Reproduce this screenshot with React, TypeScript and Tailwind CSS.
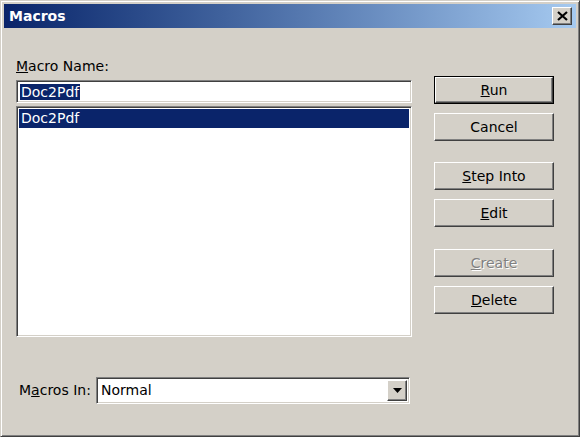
import React from "react";

const FONT = "font-['Tahoma','DejaVu_Sans','Liberation_Sans',sans-serif]";

const raised =
  "border border-t-white border-l-white border-r-[#404040] border-b-[#404040] shadow-[inset_-1px_-1px_0_#808080]";
const sunken =
  "border border-t-[#808080] border-l-[#808080] border-r-white border-b-white shadow-[inset_1px_1px_0_#404040,inset_-1px_-1px_0_#d4d0c8]";

function Btn({
  children,
  isDefault,
  disabled,
  className = "",
}: {
  children: React.ReactNode;
  isDefault?: boolean;
  disabled?: boolean;
  className?: string;
}) {
  const face = (
    <div
      className={`${raised} h-full w-full bg-[#d4d0c8] flex items-center justify-center text-[14px] ${
        disabled ? "text-[#808080] [text-shadow:1px_1px_0_#fff]" : "text-black"
      }`}
    >
      {children}
    </div>
  );
  if (isDefault) {
    return <div className={`h-[28px] border border-black ${className}`}>{face}</div>;
  }
  return <div className={`h-[28px] ${className}`}>{face}</div>;
}

export default function App() {
  return (
    <div
      className={`${FONT} w-[580px] h-[437px] bg-[#d4d0c8] border border-t-[#d4d0c8] border-l-[#d4d0c8] border-r-[#404040] border-b-[#404040] shadow-[inset_1px_1px_0_#fff,inset_-1px_-1px_0_#808080] p-[3px] flex flex-col overflow-hidden`}
    >
      {/* Title bar */}
      <div className="h-[24px] flex items-center justify-between pl-[5px] pr-[4px] bg-gradient-to-r from-[#0a246a] to-[#a6caf0]">
        <span className="text-white font-bold text-[14px] leading-none">Macros</span>
        <div
          className={`${raised} w-[20px] h-[18px] bg-[#d4d0c8] flex items-center justify-center`}
        >
          <svg width="11" height="10" viewBox="0 0 11 10">
            <path d="M1 1 L10 9 M10 1 L1 9" stroke="#000" strokeWidth="2.2" />
          </svg>
        </div>
      </div>

      {/* Body */}
      <div className="flex flex-1">
        {/* Left column */}
        <div className="ml-[12px] w-[396px] flex flex-col pt-[30px]">
          <div className="text-[14px] leading-[16px] text-black h-[16px]">
            <u>M</u>acro Name:
          </div>
          <div className={`${sunken} mt-[6px] h-[23px] bg-white flex items-center px-[3px]`}>
            <span className="bg-[#0a246a] text-white text-[14px] leading-[16px] px-[1px]">
              Doc2Pdf
            </span>
          </div>
          <div className={`${sunken} mt-[3px] h-[231px] bg-white p-[2px]`}>
            <div className="h-[19px] bg-[#0a246a] text-white text-[14px] leading-[19px] pl-[2px]">
              Doc2Pdf
            </div>
          </div>
          <div className="mt-[40px] flex items-center">
            <div className="ml-[3px] w-[77px] text-[14px] text-black">
              M<u>a</u>cros In:
            </div>
            <div className={`${sunken} w-[314px] h-[27px] bg-white flex items-center p-[2px]`}>
              <span className="flex-1 pl-[2px] text-[14px] text-black">Normal</span>
              <div
                className={`${raised} w-[20px] h-full bg-[#d4d0c8] flex items-center justify-center`}
              >
                <svg width="9" height="5" viewBox="0 0 9 5">
                  <path d="M0 0 H9 L4.5 5 Z" fill="#000" />
                </svg>
              </div>
            </div>
          </div>
        </div>

        {/* Right column */}
        <div className="ml-[22px] w-[120px] flex flex-col pt-[48px]">
          <Btn isDefault>
            <span>
              <u>R</u>un
            </span>
          </Btn>
          <Btn className="mt-[9px]">Cancel</Btn>
          <Btn className="mt-[21px]">
            <span>
              <u>S</u>tep Into
            </span>
          </Btn>
          <Btn className="mt-[9px]">
            <span>
              <u>E</u>dit
            </span>
          </Btn>
          <Btn className="mt-[22px]" disabled>
            <span>
              <u>C</u>reate
            </span>
          </Btn>
          <Btn className="mt-[9px]">
            <span>
              <u>D</u>elete
            </span>
          </Btn>
        </div>
      </div>
    </div>
  );
}
